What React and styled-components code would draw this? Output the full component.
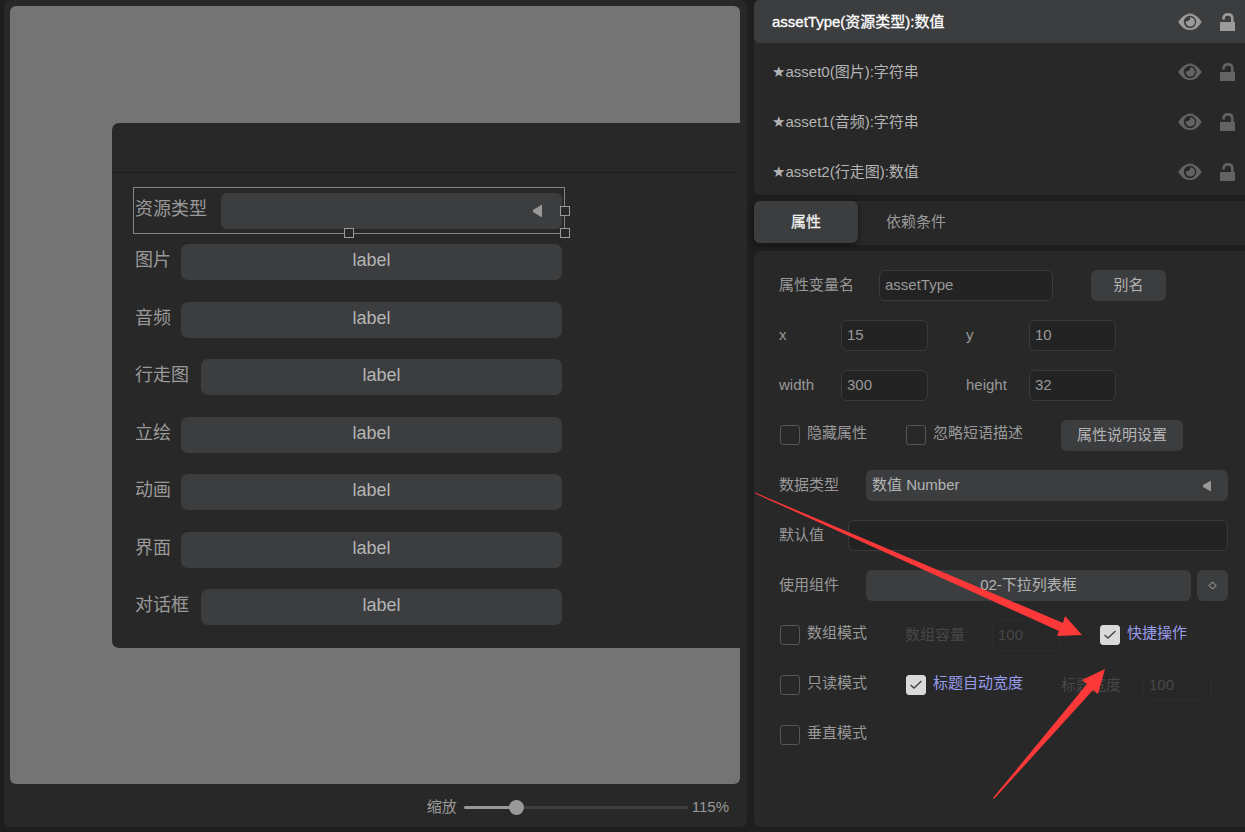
import React, { useState } from 'react';
import styled, { createGlobalStyle } from 'styled-components';

const GlobalStyle = createGlobalStyle`
  * {
    box-sizing: border-box;
  }

  body {
    margin: 0;
    background: #1e1e1e;
    color: #999;
  }

  body, button, input, select {
    font-family: "Liberation Sans", "DejaVu Sans", "Noto Sans CJK SC", sans-serif;
    font-size: 15px;
    line-height: 20px;
  }
`;

const Page = styled.div`
  display: grid;
  grid-template-columns: minmax(0, 1fr) 491px;
  gap: 7px;
  height: 100vh;
  padding: 0 0 5px 4px;
  overflow: hidden;
`;

const Panel = styled.section`
  position: relative;
  background: #282828;
  border-radius: 6px 0 0 6px;
`;

const EditorPanel = styled(Panel)`
  display: flex;
  flex-direction: column;
  padding: 6px 7px 0 6px;
  border-radius: 6px;
`;

const Stage = styled.div`
  position: relative;
  flex: 1;
  overflow: hidden;
  background: #747474;
  border-radius: 6px;
`;

const DialogWindow = styled.div`
  position: absolute;
  left: 102px;
  top: 117px;
  width: 800px;
  padding-bottom: 23px;
  background: #282828;
  border-radius: 7px;
  font-size: 18px;
`;

const DialogHeader = styled.div`
  height: 50px;
  border-bottom: 1px solid #1f1f1f;
`;

const DialogBody = styled.div`
  width: 453px;
  padding: 14px 0 0 21px;
`;

const Selection = styled.div`
  position: relative;
  padding: 5px 2px 4px 1px;
  border: 1px solid #848484;
`;

const Handle = styled.span`
  position: absolute;
  width: 10px;
  height: 10px;
  border: 1px solid #999;
  background: #282828;
  left: ${({ $x }) => $x};
  top: ${({ $y }) => $y};
  transform: translate(-50%, -50%);
`;

const StageRows = styled.div`
  display: flex;
  flex-direction: column;
  justify-content: space-between;
  height: 381px;
  margin-top: 10px;
  padding: 0 3px 0 2px;
`;

const StageRow = styled.div`
  display: flex;
  height: 36px;
`;

const StageLabel = styled.label`
  flex: none;
  width: ${({ $chars }) => $chars * 20 + 6}px;
  line-height: 33px;
  white-space: nowrap;
`;

const StageButton = styled.button`
  flex: 1;
  padding: 0 0 4px;
  border: 0;
  border-radius: 7px;
  background: #3c3d3f;
  color: #b4b4b4;
  font-size: 18px;
`;

const SelectWrap = styled.div`
  position: relative;
  flex: 1;
  align-self: stretch;
  display: flex;
`;

const SelectBox = styled.select`
  flex: 1;
  appearance: none;
  padding: 0 6px 2px;
  border: 0;
  border-radius: 6px;
  background: #3c3d3f;
  color: #b4b4b4;
`;

const Caret = styled.svg`
  position: absolute;
  right: ${({ $right }) => $right}px;
  top: 50%;
  transform: translateY(-50%);
  fill: #999;
  pointer-events: none;
`;

const ZoomBar = styled.div`
  display: flex;
  align-items: center;
  justify-content: flex-end;
  height: 43px;
  padding: 3px 11px 0 0;
`;

const ZoomSlider = styled.input`
  appearance: none;
  width: 224px;
  height: 3px;
  margin: 0 4px 0 7px;
  border-radius: 2px;

  &::-webkit-slider-thumb {
    appearance: none;
    width: 15px;
    height: 15px;
    border-radius: 50%;
    background: #999;
  }
`;

const Sidebar = styled.div`
  display: flex;
  flex-direction: column;
  gap: 6px;
  min-width: 0;
`;

const AttributeList = styled(Panel)`
  display: flex;
  flex-direction: column;
  gap: 7px;
  padding-bottom: 2px;
`;

const AttributeRow = styled.div`
  display: flex;
  align-items: center;
  height: 43px;
  padding: 0 10px 0 18px;
  border-radius: 6px 0 0 6px;
  background: ${({ $active }) => ($active ? '#3c3d3f' : 'transparent')};
  color: ${({ $active }) => ($active ? '#fff' : '#b4b4b4')};
  -webkit-text-stroke: ${({ $active }) => ($active ? '0.3px #fff' : '0')};
`;

const AttributeName = styled.span`
  flex: 1;
`;

const IconButton = styled.button`
  display: flex;
  padding: 0;
  margin-left: 18px;
  border: 0;
  background: none;
  color: ${({ $active }) => ($active ? '#9b9b9b' : '#636363')};
`;

const TabBar = styled(Panel)`
  display: flex;
  align-items: flex-start;
  height: 44px;
`;

const Tab = styled.button`
  width: ${({ $active }) => ($active ? 104 : 116)}px;
  height: 42px;
  padding: 0;
  border: 0;
  border-radius: 6px;
  background: ${({ $active }) => ($active ? '#3c3d3f' : 'transparent')};
  box-shadow: ${({ $active }) => ($active ? '0 2px 5px rgba(0, 0, 0, 0.5)' : 'none')};
  color: ${({ $active }) => ($active ? '#eee' : '#999')};
  -webkit-text-stroke: ${({ $active }) => ($active ? '0.3px #eee' : '0')};
`;

const FormPanel = styled(Panel)`
  display: flex;
  flex-direction: column;
  flex: 1;
  gap: 19px;
  padding: 19px 17px 0 25px;
`;

const FormRow = styled.div`
  display: flex;
  align-items: center;
  height: 31px;
`;

const Cell = styled.div`
  display: flex;
  align-items: center;
  width: ${({ $width }) => $width}px;
`;

const FieldLabel = styled.label`
  flex: none;
  width: ${({ $width }) => $width}px;
  padding-bottom: 2px;
  color: ${({ $dim }) => ($dim ? '#474747' : '#999')};
`;

const TextInput = styled.input`
  width: ${({ $width }) => ($width ? `${$width}px` : 'auto')};
  flex: ${({ $width }) => ($width ? 'none' : 1)};
  min-width: 0;
  height: 31px;
  padding: 0 5px 2px;
  border: 1px solid #3a3a3c;
  border-radius: 6px;
  background: #232323;
  color: #999;

  &:disabled {
    border-color: #2d2d2d;
    background: #272727;
    color: #474747;
  }
`;

const PushButton = styled.button`
  width: ${({ $width }) => ($width ? `${$width}px` : 'auto')};
  flex: ${({ $width }) => ($width ? 'none' : 1)};
  height: 31px;
  padding: 0 0 2px;
  border: 0;
  border-radius: 6px;
  background: #3c3d3f;
  color: #b4b4b4;
`;

const CheckLabel = styled.label`
  position: relative;
  display: flex;
  align-items: center;
  padding-bottom: 2px;
  color: ${({ $checked }) => ($checked ? '#989cec' : '#999')};
`;

const CheckBox = styled.input`
  appearance: none;
  width: 20px;
  height: 20px;
  margin: 0 7px 0 1px;
  border: 1px solid #555;
  border-radius: 3px;

  &:checked {
    border-color: #dadada;
    background: #dadada;
  }
`;

const CheckMark = styled.svg`
  position: absolute;
  left: 1px;
  fill: none;
  stroke: #444;
  pointer-events: none;
`;

const CheckText = styled.span`
  padding-bottom: 4px;
`;

const Annotation = styled.svg`
  position: absolute;
  left: 0;
  top: 0;
  fill: #fd3838;
  pointer-events: none;
`;

const attributes = [
  { id: 'assetType', text: 'assetType(资源类型):数值' },
  { id: 'asset0', text: '★asset0(图片):字符串' },
  { id: 'asset1', text: '★asset1(音频):字符串' },
  { id: 'asset2', text: '★asset2(行走图):数值' },
];

const stageItems = ['图片', '音频', '行走图', '立绘', '动画', '界面', '对话框'];

const EyeIcon = () => (
  <svg width="24" height="18" viewBox="0 0 24 18" fill="currentColor">
    <path
      fillRule="evenodd"
      d="M0 9C1 8.500 1.200 7.500 2.500 6C4.500 3 8 1 12 1s7.500 2 9.500 5C22.800 7.500 23 8.500 24 9c-1 .5-1.200 1.500-2.500 3C19.500 15 16 17 12 17s-7.500-2-9.500-5C1.200 10.500 1 9.500 0 9Zm12-6.200a6.200 6.200 0 1 0 0 12.400a6.200 6.200 0 0 0 0-12.400Z"
    />
    <path d="M12 4.500H13.500A4.600 4.600 0 1 1 7.800 8.200H10.500V7H12Z" />
    <rect x="10" y="0" width="5" height="1" opacity="0.4" />
  </svg>
);

const LockIcon = () => (
  <svg width="15" height="18" viewBox="0 0 15 18">
    <rect y="9" width="15" height="9" fill="currentColor" />
    <path
      d="M3.500 6.500V5.500C3.500 3 5 1.400 7.800 1.400S12.300 3 12.300 5.500V9.500"
      fill="none"
      stroke="currentColor"
      strokeWidth="2.600"
    />
  </svg>
);

const Check = ({ children, defaultChecked = false }) => {
  const [checked, setChecked] = useState(defaultChecked);
  return (
    <CheckLabel $checked={checked}>
      <CheckBox
        type="checkbox"
        checked={checked}
        onChange={(e) => setChecked(e.target.checked)}
      />
      {checked && (
        <CheckMark width="20" height="20" viewBox="0 0 20 20">
          <path d="M4.500 10L8 13L15.500 6" strokeWidth="1.400" />
        </CheckMark>
      )}
      <CheckText>{children}</CheckText>
    </CheckLabel>
  );
};

const DropDown = ({ id, options = [], caretWidth = 8, caretHeight = 11, caretRight = 17 }) => (
  <SelectWrap>
    <SelectBox id={id}>
      {options.map((option) => (
        <option key={option}>{option}</option>
      ))}
    </SelectBox>
    <Caret
      $right={caretRight}
      width={caretWidth}
      height={caretHeight}
      viewBox="0 0 8 12"
      preserveAspectRatio="none"
    >
      <path d="M8 0V12L0 7V5Z" />
    </Caret>
  </SelectWrap>
);

const Editor = () => {
  const [zoom, setZoom] = useState(115);
  // the thumb is 15px wide, so its centre travels 209px of the track
  const fill = 7 + ((zoom - 50) / 300) * 209;

  return (
    <EditorPanel>
      <Stage>
        <DialogWindow>
          <DialogHeader />
          <DialogBody>
            <Selection>
              <StageRow>
                <StageLabel $chars={4} htmlFor="stage-type">资源类型</StageLabel>
                <DropDown id="stage-type" caretWidth={9} caretHeight={13} caretRight={20} />
              </StageRow>
              <Handle $x="calc(100% + 1px)" $y="50%" />
              <Handle $x="50%" $y="100%" />
              <Handle $x="calc(100% + 1px)" $y="100%" />
            </Selection>
            <StageRows>
              {stageItems.map((name) => (
                <StageRow key={name}>
                  <StageLabel $chars={name.length} htmlFor={`stage-${name}`}>{name}</StageLabel>
                  <StageButton id={`stage-${name}`}>label</StageButton>
                </StageRow>
              ))}
            </StageRows>
          </DialogBody>
        </DialogWindow>
      </Stage>
      <ZoomBar>
        <label htmlFor="zoom">缩放</label>
        <ZoomSlider
          id="zoom"
          type="range"
          min="50"
          max="350"
          value={zoom}
          onChange={(e) => setZoom(Number(e.target.value))}
          style={{ background: `linear-gradient(to right, #999 ${fill}px, #3f3f3f ${fill}px)` }}
        />
        <span>{zoom}%</span>
      </ZoomBar>
    </EditorPanel>
  );
};

const AttributeForm = () => (
  <FormPanel>
    <FormRow>
      <FieldLabel $width={100} htmlFor="name">属性变量名</FieldLabel>
      <Cell $width={212}>
        <TextInput id="name" $width={174} defaultValue="assetType" />
      </Cell>
      <PushButton $width={75}>别名</PushButton>
    </FormRow>
    <FormRow>
      <FieldLabel $width={62} htmlFor="x">x</FieldLabel>
      <Cell $width={125}>
        <TextInput id="x" $width={87} defaultValue="15" />
      </Cell>
      <FieldLabel $width={63} htmlFor="y">y</FieldLabel>
      <TextInput id="y" $width={87} defaultValue="10" />
    </FormRow>
    <FormRow>
      <FieldLabel $width={62} htmlFor="width">width</FieldLabel>
      <Cell $width={125}>
        <TextInput id="width" $width={87} defaultValue="300" />
      </Cell>
      <FieldLabel $width={63} htmlFor="height">height</FieldLabel>
      <TextInput id="height" $width={87} defaultValue="32" />
    </FormRow>
    <FormRow>
      <Cell $width={126}>
        <Check>隐藏属性</Check>
      </Cell>
      <Cell $width={156}>
        <Check>忽略短语描述</Check>
      </Cell>
      <PushButton $width={122}>属性说明设置</PushButton>
    </FormRow>
    <FormRow>
      <FieldLabel $width={87} htmlFor="dataType">数据类型</FieldLabel>
      <DropDown id="dataType" options={['数值 Number']} />
    </FormRow>
    <FormRow>
      <FieldLabel $width={69} htmlFor="defaultValue">默认值</FieldLabel>
      <TextInput id="defaultValue" />
    </FormRow>
    <FormRow>
      <FieldLabel $width={87} htmlFor="component">使用组件</FieldLabel>
      <PushButton id="component">02-下拉列表框</PushButton>
      <Cell $width={6} />
      <PushButton $width={31} aria-label="component settings">
        <svg width="9" height="9" viewBox="0 0 9 9" fill="none" stroke="#b4b4b4">
          <path d="M4.500 1L8 4.500L4.500 8L1 4.500Z" />
        </svg>
      </PushButton>
    </FormRow>
    <FormRow>
      <Cell $width={126}>
        <Check>数组模式</Check>
      </Cell>
      <Cell $width={194}>
        <FieldLabel $width={87} $dim htmlFor="capacity">数组容量</FieldLabel>
        <TextInput id="capacity" $width={68} defaultValue="100" disabled />
      </Cell>
      <Check defaultChecked>快捷操作</Check>
    </FormRow>
    <FormRow>
      <Cell $width={126}>
        <Check>只读模式</Check>
      </Cell>
      <Cell $width={156}>
        <Check defaultChecked>标题自动宽度</Check>
      </Cell>
      <FieldLabel $width={82} $dim htmlFor="titleWidth">标题宽度</FieldLabel>
      <TextInput id="titleWidth" $width={68} defaultValue="100" disabled />
    </FormRow>
    <FormRow>
      <Check>垂直模式</Check>
    </FormRow>
    <Annotation width="491" height="576" viewBox="0 0 491 576">
      <path d="M1 241.500L309 372L311 365L328 384L303 385L305 380L1 242.500Z" />
      <path d="M239 547L333 433L328 429L351 418L344 443L339 439L240 548Z" />
    </Annotation>
  </FormPanel>
);

const App = () => (
  <>
    <GlobalStyle />
    <Page>
      <Editor />
      <Sidebar>
        <AttributeList>
          {attributes.map(({ id, text }, index) => (
            <AttributeRow key={id} $active={index === 0}>
              <AttributeName>{text}</AttributeName>
              <IconButton $active={index === 0} aria-label="visible">
                <EyeIcon />
              </IconButton>
              <IconButton $active={index === 0} aria-label="lock">
                <LockIcon />
              </IconButton>
            </AttributeRow>
          ))}
        </AttributeList>
        <TabBar>
          <Tab $active>属性</Tab>
          <Tab>依赖条件</Tab>
        </TabBar>
        <AttributeForm />
      </Sidebar>
    </Page>
  </>
);

export default App;
